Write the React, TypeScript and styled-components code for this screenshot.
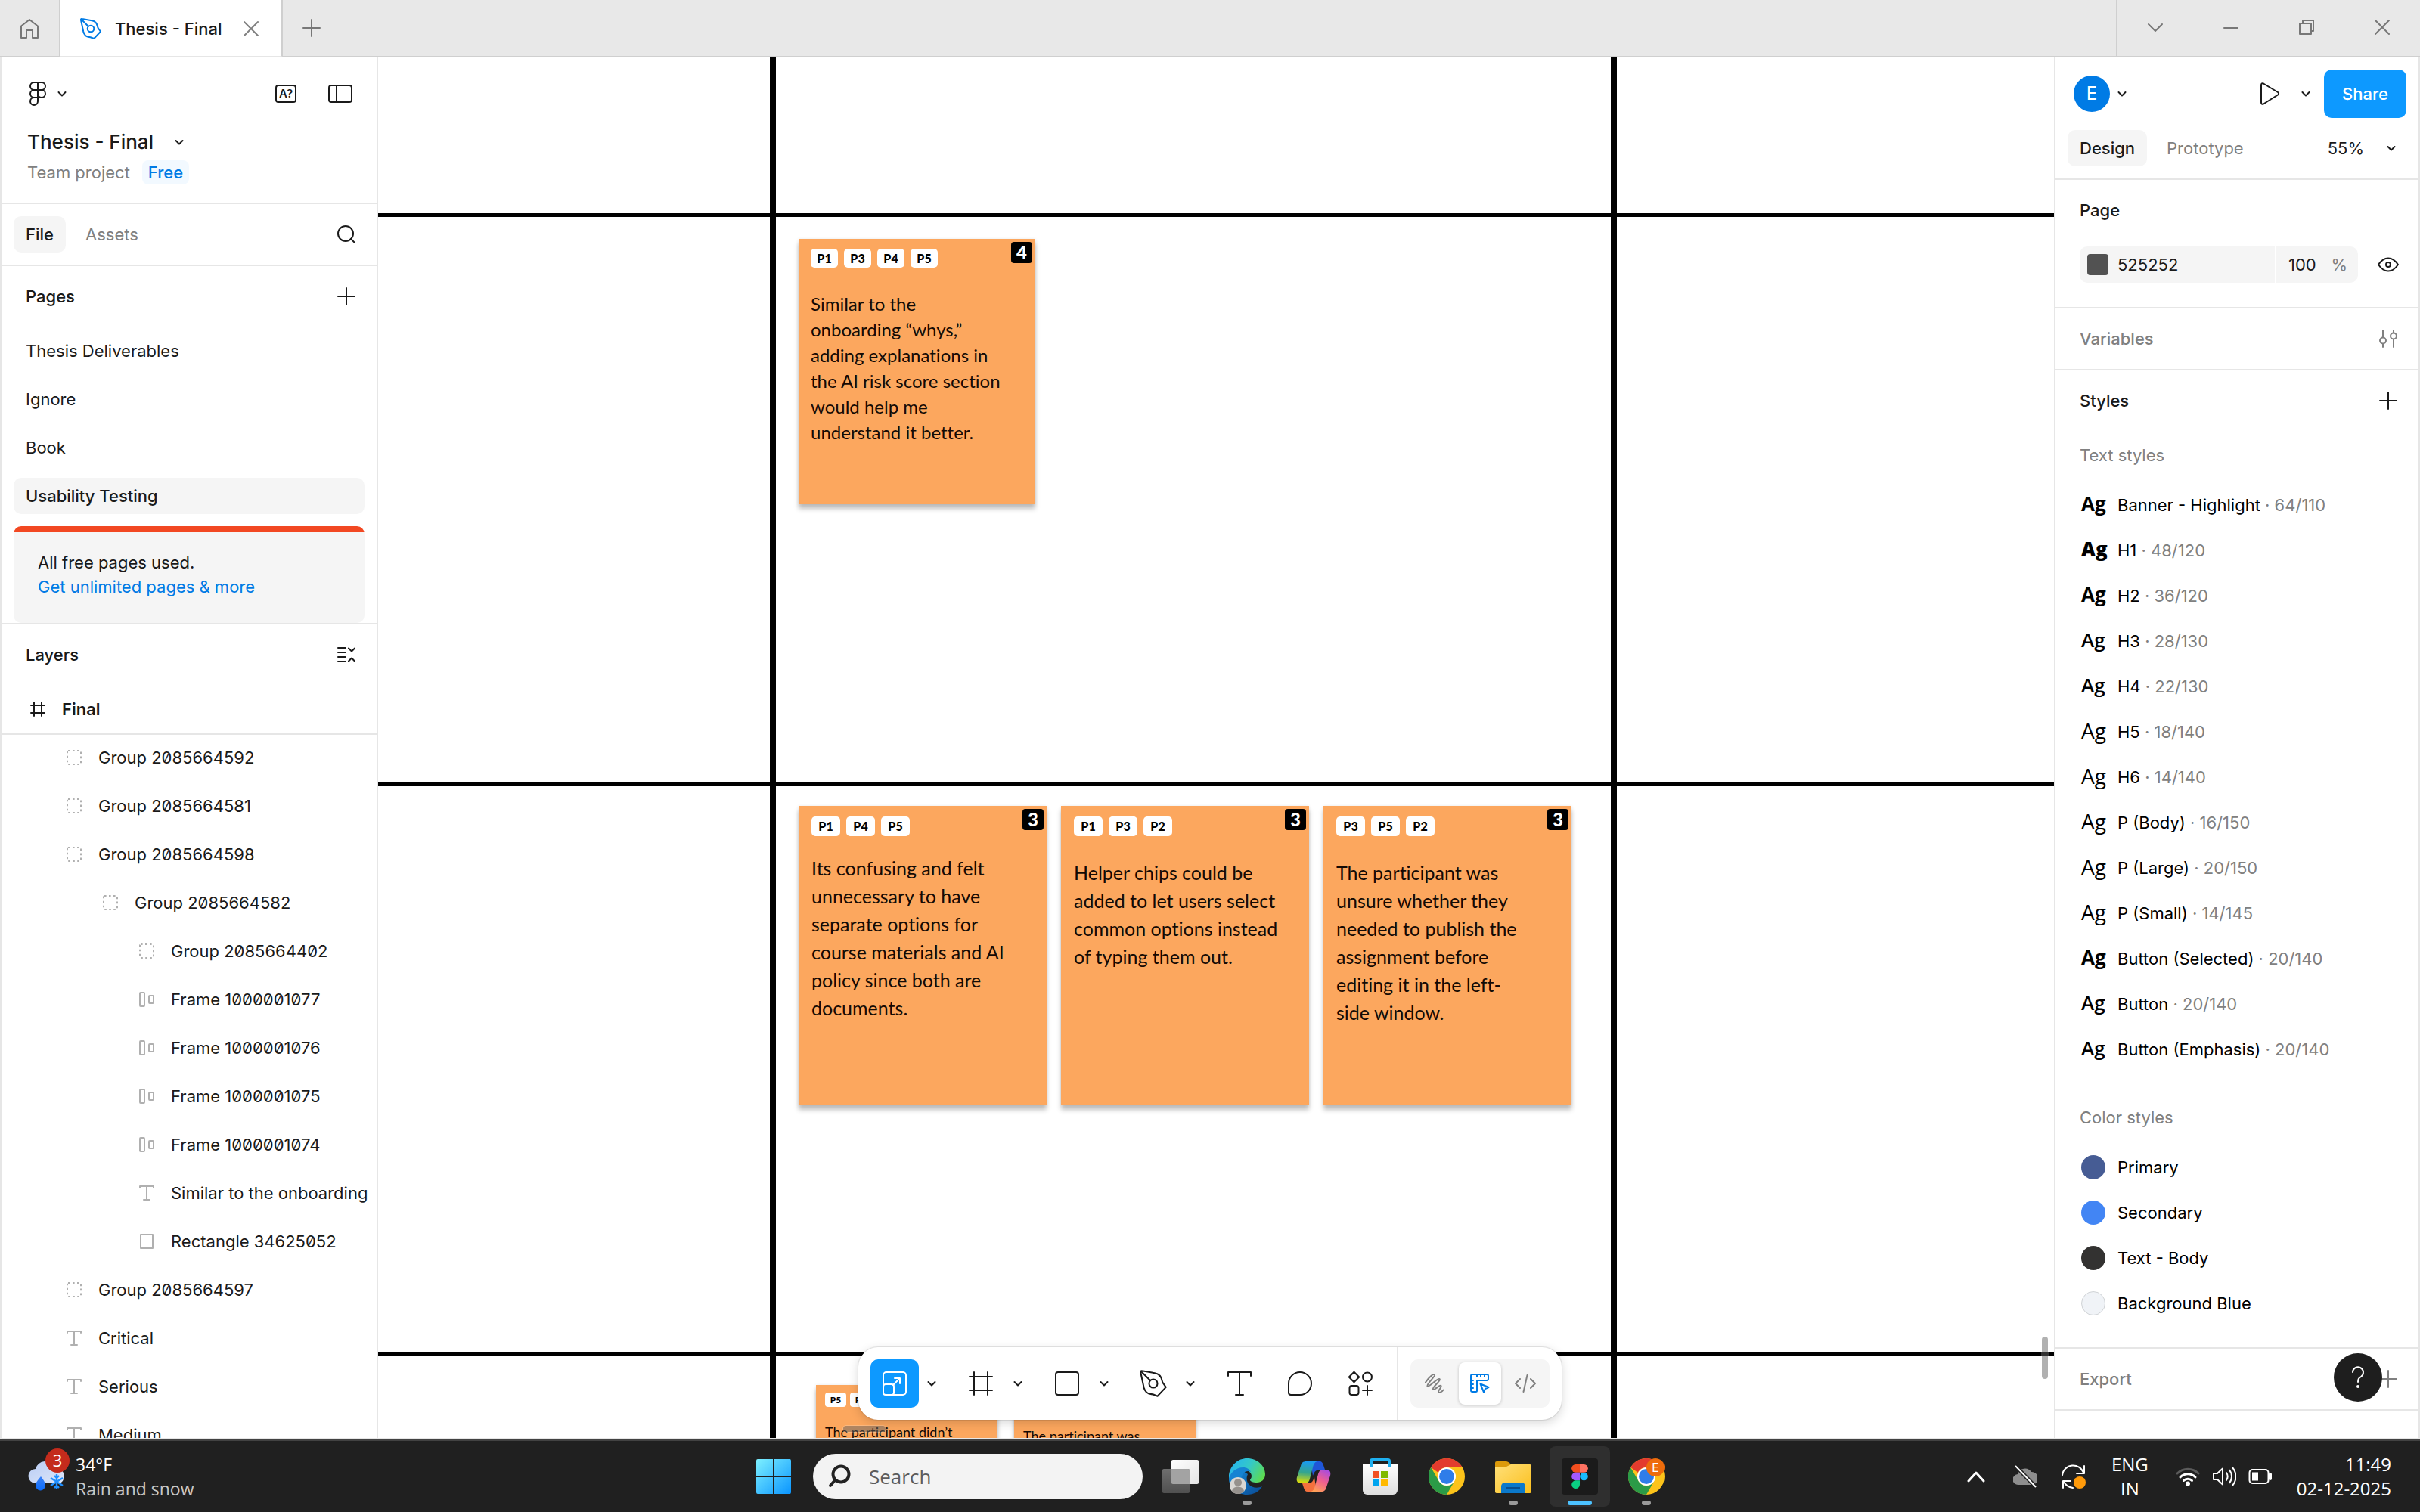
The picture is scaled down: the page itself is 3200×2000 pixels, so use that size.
import React from 'react';
import styled, { createGlobalStyle, css } from 'styled-components';

const c = {
  text: '#1a1a1a',
  muted: '#808080',
  line: '#e6e6e6',
  fill: '#f5f5f5',
  blue: '#0d99ff',
  link: '#007be5',
  note: '#fca75e',
  bar: '#202020',
};

const ui = "Inter, 'Liberation Sans', sans-serif";
const noteFont = "Lato, 'Liberation Sans', sans-serif";
const winFont = "'Open Sans', 'Noto Sans', sans-serif";

const GlobalStyle = createGlobalStyle`
  *, *::before, *::after { box-sizing: border-box; }
  html, body { margin: 0; padding: 0; }
  body { background: #fff; color: ${c.text}; font-family: ${ui}; font-size: 22px; line-height: 32px; overflow: hidden; }
  button, input { font: inherit; color: inherit; border: 0; background: none; padding: 0; margin: 0; }
  button { cursor: pointer; }
  ul { list-style: none; margin: 0; padding: 0; }
  h1, h2, h3, p { margin: 0; font: inherit; }
  svg { display: block; flex: none; }
`;

/* ---------- icons ---------- */

type IconProps = { w: number; h?: number; stroke?: string; sw?: number; children: React.ReactNode };
const Icon = ({ w, h = w, stroke = 'currentColor', sw = 2, children }: IconProps) => (
  <svg width={w} height={h} viewBox={`0 0 ${w} ${h}`} fill="none" stroke={stroke} strokeWidth={sw} strokeLinecap="round" strokeLinejoin="round" aria-hidden="true">
    {children}
  </svg>
);

const Chevron = () => <Icon w={24} sw={2}><path d="M7.500 10l4.500 4.500 4.500-4.500" /></Icon>;
const Plus = () => <Icon w={24}><path d="M12 1v22M1 12h22" /></Icon>;
const HomeIcon = () => <Icon w={28}><path d="M3 11.500L14 3l11 8.500V27h-7V17h-8v10H3z" /></Icon>;
const CloseIcon = () => <Icon w={24}><path d="M3 3l18 18M21 3L3 21" /></Icon>;
const PenIcon = ({ size = 32 }: { size?: number }) => (
  <svg width={size} height={size} viewBox="0 0 28 28" fill="none" stroke="currentColor" strokeWidth={size > 28 ? 1.6 : 2} strokeLinejoin="round" strokeLinecap="round" aria-hidden="true">
    <path d="M1 2.500C.8 1.500 1.500.8 2.500 1L15.500 3.300C19.500 4 22.300 7 23 11c.2 1.300.7 2.300 1.500 3.200l2.500 3.600-8.700 9.200-3.300-1.300c-1-.4-2-.6-3-.7-4-.4-6.700-3-7.700-7z" />
    <path d="M1.500 1.500l9.200 9.200" /><circle cx="14" cy="14" r="4.300" />
  </svg>
);
const FigmaOutline = () => (
  <Icon w={24} h={34}>
    <path d="M12 2H7a5 5 0 0 0 0 10h5zM12 2h5a5 5 0 0 1 0 10h-5zM12 12H7a5 5 0 0 0 0 10h5zM12 17a5 5 0 1 0 10 0 5 5 0 0 0-10 0zM7 22h5v5a5 5 0 1 1-5-5z" />
  </Icon>
);
const SidebarIcon = () => <Icon w={32} h={24}><rect x="1" y="1" width="30" height="22" rx="3" /><path d="M11 1v22" /></Icon>;
const SearchIcon = () => <Icon w={24}><circle cx="11" cy="11" r="10" /><path d="M18 18l5 5" /></Icon>;
const CollapseIcon = () => <Icon w={24} h={20}><path d="M1 1h10M1 7h10M1 13h10M1 19h10M15 1.500l4 4 4-4M15 18.500l4-4 4 4" /></Icon>;
const FrameIcon = ({ size = 20 }: { size?: number }) => (
  <Icon w={size}>
    {size === 20 ? <path d="M5 1v18M15 1v18M1 5h18M1 15h18" /> : <path d="M7 1v30M25 1v30M1 7h30M1 25h30" />}
  </Icon>
);

const layerIcons = {
  group: <Icon w={20} stroke="#b0b0b0"><rect x="1" y="1" width="18" height="18" rx="1" strokeDasharray="2.600 3.400" strokeLinecap="butt" /></Icon>,
  auto: <Icon w={20} stroke="#b0b0b0"><rect x="1" y="1" width="6" height="18" rx="1" /><rect x="13" y="5" width="6" height="10" rx="1" /></Icon>,
  text: <Icon w={20} stroke="#b0b0b0"><path d="M1 3V1h18v2M10 1v18M6 19h8" /></Icon>,
  rect: <Icon w={20} stroke="#b0b0b0"><rect x="2" y="1" width="16" height="18" /></Icon>,
};

/* ---------- shell ---------- */

const App_ = styled.div`
  display: grid;
  grid-template-rows: 76px minmax(0, 1fr) 96px;
  height: 100vh;
`;

const TitleBar = styled.header`
  display: flex;
  background: #e8e8e8;
  color: #777;
  border-bottom: 2px solid #cfcfcf;
`;
const HomeTab = styled.button`
  display: grid;
  place-items: center;
  width: 80px;
  border-right: 2px solid #cfcfcf;
`;
const FileTab = styled.div`
  display: flex;
  align-items: center;
  padding: 2px 28px 0 26px;
  margin-bottom: -2px;
  background: #fff;
  color: ${c.text};
  border-right: 2px solid #cfcfcf;
  border-bottom: 2px solid ${c.line};
`;
const TabIcon = styled.span`color: ${c.link};`;
const TabName = styled.span`
  padding: 0 27px 0 18px;
  font-weight: 500;
  font-size: 22px;
`;
const TabClose = styled.button`color: #808080;`;
const BarButton = styled.button`
  display: grid;
  place-items: center;
  width: 76px;
`;
const WindowButtons = styled.div`
  display: grid;
  grid-template-columns: repeat(4, 100px);
  margin-left: auto;
  padding-bottom: 2px;
  border-left: 2px solid #cfcfcf;
`;
const WindowButton = styled.button`
  display: grid;
  place-items: center;
`;

const Workspace = styled.div`
  position: relative;
  display: grid;
  grid-template-columns: 500px minmax(0, 1fr) 484px;
  min-height: 0;
  border-bottom: 2px solid ${c.line};
`;

const Panel = styled.aside`
  min-height: 0;
  overflow: hidden;
  background: #fff;
  border-left: 2px solid ${c.line};
  border-right: 2px solid ${c.line};
`;
const Section = styled.section<{ $pad?: string }>`
  padding: ${p => p.$pad ?? '0'};
  border-bottom: 2px solid ${c.line};
`;
const TopRow = styled.div<{ $pad: string }>`
  display: flex;
  align-items: center;
  height: 96px;
  padding: ${p => p.$pad};
`;
const Spacer = styled.span`flex: 1;`;
const IconButton = styled.button<{ $gap?: number; $mr?: number; $muted?: boolean }>`
  display: flex;
  align-items: center;
  gap: ${p => p.$gap ?? 0}px;
  margin-right: ${p => p.$mr ?? 0}px;
  color: ${p => (p.$muted ? c.muted : c.text)};
`;
const MissingFonts = styled.span`
  display: grid;
  place-items: center;
  width: 28px;
  height: 24px;
  border: 2px solid ${c.text};
  border-radius: 4px;
  font-size: 15px;
  line-height: 20px;
  font-weight: 600;
`;
const FileTitle = styled.button`
  display: flex;
  align-items: center;
  gap: 22px;
  height: 32px;
  padding-left: 34px;
  font-size: 26px;
  font-weight: 550;
`;
const FileMeta = styled.div`
  display: flex;
  align-items: center;
  gap: 16px;
  padding: 8px 0 24px 34px;
  color: ${c.muted};
`;
const PlanBadge = styled.span`
  padding: 0 8px;
  border-radius: 8px;
  background: #f2f9ff;
  color: ${c.link};
  font-weight: 500;
`;
const TabRow = styled.div<{ $pad: string }>`
  display: flex;
  align-items: center;
  gap: 10px;
  padding: ${p => p.$pad};
`;
const TabButton = styled.button<{ $active?: boolean }>`
  height: 48px;
  padding: 0 16px;
  border-radius: 10px;
  color: ${c.muted};
  ${p => p.$active && css`
    background: ${c.fill};
    color: ${c.text};
    font-weight: 550;
  `}
`;
const HeaderRow = styled.div<{ $muted?: boolean }>`
  display: flex;
  align-items: center;
  justify-content: space-between;
  height: 80px;
  padding: 0 28px 0 32px;
  font-weight: 550;
  color: ${p => (p.$muted ? c.muted : c.text)};
`;

/* ---------- left panel ---------- */

const PageList = styled.ul`padding: 0 16px;`;
const PageItem = styled.li`padding: 8px 0;`;
const PageButton = styled.button<{ $active?: boolean }>`
  display: block;
  width: 100%;
  height: 48px;
  padding: 0 16px;
  border-radius: 10px;
  text-align: left;
  ${p => p.$active && css`
    background: ${c.fill};
    font-weight: 550;
  `}
`;
const Upsell = styled.div`
  margin: 8px 16px 0;
  padding: 32px;
  border-radius: 10px;
  background: linear-gradient(#f24822 8px, ${c.fill} 8px);
`;
const UpsellLink = styled.a`
  color: ${c.link};
  text-decoration: none;
`;
const FrameRow = styled.div`
  display: flex;
  align-items: center;
  gap: 22px;
  height: 64px;
  padding-left: 38px;
  font-weight: 600;
  box-shadow: 0 2px 0 ${c.line};
`;
const LayerRow = styled.li<{ $depth: number }>`
  display: flex;
  align-items: center;
  gap: 22px;
  height: 64px;
  padding-left: ${p => 38 + p.$depth * 48}px;
  white-space: nowrap;
  font-variant-numeric: slashed-zero;
`;

type LayerKind = keyof typeof layerIcons;
const layers: [number, LayerKind, string][] = [
  [1, 'group', 'Group 2085664592'],
  [1, 'group', 'Group 2085664581'],
  [1, 'group', 'Group 2085664598'],
  [2, 'group', 'Group 2085664582'],
  [3, 'group', 'Group 2085664402'],
  [3, 'auto', 'Frame 1000001077'],
  [3, 'auto', 'Frame 1000001076'],
  [3, 'auto', 'Frame 1000001075'],
  [3, 'auto', 'Frame 1000001074'],
  [3, 'text', 'Similar to the onboarding'],
  [3, 'rect', 'Rectangle 34625052'],
  [1, 'group', 'Group 2085664597'],
  [1, 'text', 'Critical'],
  [1, 'text', 'Serious'],
  [1, 'text', 'Medium'],
];

const LeftPanel = () => (
  <Panel aria-label="Navigation">
    <Section>
      <TopRow $pad="0 32px 0 36px">
        <IconButton $gap={8} aria-label="Main menu"><FigmaOutline /><Chevron /></IconButton>
        <Spacer />
        <IconButton $mr={42} aria-label="Missing fonts"><MissingFonts>A?</MissingFonts></IconButton>
        <IconButton aria-label="Toggle sidebar"><SidebarIcon /></IconButton>
      </TopRow>
      <FileTitle>Thesis - Final<Chevron /></FileTitle>
      <FileMeta>Team project<PlanBadge>Free</PlanBadge></FileMeta>
    </Section>
    <Section>
      <TabRow $pad="16px 28px 16px 16px">
        <TabButton $active>File</TabButton>
        <TabButton>Assets</TabButton>
        <Spacer />
        <IconButton aria-label="Search"><SearchIcon /></IconButton>
      </TabRow>
    </Section>
    <Section>
      <HeaderRow><h2>Pages</h2><IconButton aria-label="Add page"><Plus /></IconButton></HeaderRow>
      <PageList>
        {['Thesis Deliverables', 'Ignore', 'Book', 'Usability Testing'].map(name => (
          <PageItem key={name}><PageButton $active={name === 'Usability Testing'}>{name}</PageButton></PageItem>
        ))}
      </PageList>
      <Upsell>
        <p>All free pages used.</p>
        <UpsellLink href="#upgrade">Get unlimited pages &amp; more</UpsellLink>
      </Upsell>
    </Section>
    <HeaderRow><h2>Layers</h2><IconButton aria-label="Collapse layers"><CollapseIcon /></IconButton></HeaderRow>
    <FrameRow><FrameIcon />Final</FrameRow>
    <ul>
      {layers.map(([depth, kind, name]) => (
        <LayerRow key={name} $depth={depth}>{layerIcons[kind]}{name}</LayerRow>
      ))}
    </ul>
  </Panel>
);

/* ---------- canvas ---------- */

const Canvas = styled.main`
  position: relative;
  overflow: hidden;
  background: #fff;
`;
const VLine = styled.div<{ $x: number }>`
  position: absolute;
  left: ${p => p.$x}px;
  top: 0;
  bottom: 0;
  width: 8px;
  background: #000;
`;
const HLine = styled.div<{ $y: number }>`
  position: absolute;
  top: ${p => p.$y}px;
  left: 0;
  right: 0;
  height: 5px;
  background: #000;
`;

type NoteSize = 'xs' | 's' | 'm';
const noteScale = {
  xs: { w: 240, h: 264, pad: 12, top: 10, chipW: 28, chipH: 19, gap: 5, chip: 12, font: 18, lh: 27, r: 4 },
  s: { w: 313, h: 351, pad: 16, top: 13, chipW: 36, chipH: 25, gap: 8, chip: 16, font: 24, lh: 34, r: 5 },
  m: { w: 328, h: 396, pad: 17, top: 14, chipW: 38, chipH: 26, gap: 8, chip: 16, font: 25, lh: 37, r: 5 },
};
const Note = styled.article<{ $size: NoteSize; $x: number; $y: number }>`
  position: absolute;
  left: ${p => p.$x}px;
  top: ${p => p.$y}px;
  width: ${p => noteScale[p.$size].w}px;
  height: ${p => noteScale[p.$size].h}px;
  padding: ${p => `${noteScale[p.$size].top}px ${noteScale[p.$size].pad}px`};
  background: ${c.note};
  box-shadow: 0 6px 6px rgba(0, 0, 0, 0.25), 0 0 4px rgba(0, 0, 0, 0.08);
  font-family: ${noteFont};
  font-variant-ligatures: none;
  color: #140a04;
`;
const Chips = styled.div<{ $size: NoteSize }>`
  display: flex;
  gap: ${p => noteScale[p.$size].gap}px;
`;
const Chip = styled.span<{ $size: NoteSize }>`
  width: ${p => noteScale[p.$size].chipW}px;
  height: ${p => noteScale[p.$size].chipH}px;
  border-radius: ${p => noteScale[p.$size].r}px;
  background: #fff;
  color: #000;
  font-size: ${p => noteScale[p.$size].chip}px;
  line-height: ${p => noteScale[p.$size].chipH}px;
  font-weight: 900;
  text-align: center;
`;
const Count = styled.span`
  position: absolute;
  top: 4px;
  right: 4px;
  width: 28px;
  height: 28px;
  border-radius: 4px;
  background: #000;
  color: #fff;
  font-size: 24px;
  line-height: 28px;
  font-weight: 900;
  text-align: center;
`;
const NoteText = styled.p<{ $size: NoteSize; $top: number }>`
  margin-top: ${p => p.$top}px;
  font-size: ${p => noteScale[p.$size].font}px;
  line-height: ${p => noteScale[p.$size].lh}px;
  white-space: pre;
`;

const notes: { size: NoteSize; x: number; y: number; chips: string[]; count?: number; top: number; text: string }[] = [
  { size: 's', x: 556, y: 240, chips: ['P1', 'P3', 'P4', 'P5'], count: 4, top: 31, text: 'Similar to the\nonboarding “whys,”\nadding explanations in\nthe AI risk score section\nwould help me\nunderstand it better.' },
  { size: 'm', x: 556, y: 990, chips: ['P1', 'P4', 'P5'], count: 3, top: 24, text: 'Its confusing and felt\nunnecessary to have\nseparate options for\ncourse materials and AI\npolicy since both are\ndocuments.' },
  { size: 'm', x: 903, y: 990, chips: ['P1', 'P3', 'P2'], count: 3, top: 30, text: 'Helper chips could be\nadded to let users select\ncommon options instead\nof typing them out.' },
  { size: 'm', x: 1250, y: 990, chips: ['P3', 'P5', 'P2'], count: 3, top: 30, text: 'The participant was\nunsure whether they\nneeded to publish the\nassignment before\nediting it in the left-\nside window.' },
  { size: 'xs', x: 579, y: 1756, chips: ['P5', 'P3'], top: 20, text: 'The participant didn’t' },
  { size: 'xs', x: 841, y: 1756, chips: ['P4'], top: 25, text: 'The participant was' },
];

const ScrollThumb = styled.div<{ $vertical?: boolean }>`
  position: absolute;
  border-radius: 5px;
  background: rgba(100, 100, 100, 0.5);
  box-shadow: 0 0 0 1px rgba(255, 255, 255, 0.2);
  ${p => (p.$vertical
    ? css`right: 8px; bottom: 78px; width: 8px; height: 56px;`
    : css`left: 615px; bottom: 8px; width: 56px; height: 8px;`)}
`;

const CanvasArea = () => (
  <Canvas>
    <HLine $y={206} /><HLine $y={959} /><HLine $y={1712} />
    <VLine $x={518} /><VLine $x={1630} />
    {notes.map((n, i) => (
      <Note key={i} $size={n.size} $x={n.x} $y={n.y}>
        <Chips $size={n.size}>{n.chips.map(t => <Chip key={t} $size={n.size}>{t}</Chip>)}</Chips>
        {n.count && <Count>{n.count}</Count>}
        <NoteText $size={n.size} $top={n.top}>{n.text}</NoteText>
      </Note>
    ))}
    <ScrollThumb $vertical />
    <ScrollThumb />
  </Canvas>
);

/* ---------- floating toolbar ---------- */

const ToolbarDock = styled.div`
  position: absolute;
  left: 0;
  right: 0;
  bottom: 24px;
  display: flex;
  justify-content: center;
  pointer-events: none;
`;
const Toolbar = styled.div`
  display: flex;
  align-items: center;
  gap: 16px;
  height: 96px;
  padding: 0 16px;
  border-radius: 26px;
  background: #fff;
  box-shadow: 0 0 1px 1px rgba(0, 0, 0, 0.1), 0 4px 14px rgba(0, 0, 0, 0.16);
  pointer-events: auto;
`;
const ToolGroup = styled.div`display: flex;`;
const Tool = styled.button<{ $active?: boolean }>`
  display: grid;
  place-items: center;
  width: 64px;
  height: 64px;
  border-radius: 10px;
  background: ${p => (p.$active ? c.blue : 'transparent')};
  color: ${p => (p.$active ? '#fff' : c.text)};
`;
const ToolMenu = styled.button`
  display: grid;
  place-items: center;
  width: 34px;
`;
const ToolDivider = styled.span`
  align-self: stretch;
  width: 2px;
  background: ${c.line};
`;
const Segment = styled.div`
  display: flex;
  align-items: center;
  gap: 4px;
  height: 64px;
  padding: 4px;
  border-radius: 10px;
  background: ${c.fill};
`;
const SegmentButton = styled.button<{ $active?: boolean }>`
  display: grid;
  place-items: center;
  width: 56px;
  height: 56px;
  border-radius: 8px;
  color: ${c.muted};
  ${p => p.$active && css`
    background: #fff;
    color: ${c.link};
    box-shadow: 0 1px 4px rgba(0, 0, 0, 0.2);
  `}
`;

const menuTools: [string, React.ReactNode][] = [
  ['Scale', <Icon w={32}><path d="M1 17V5a4 4 0 0 1 4-4h22a4 4 0 0 1 4 4v22a4 4 0 0 1-4 4H13" /><path d="M1 20a3 3 0 0 1 3-3h8a3 3 0 0 1 3 3v8a3 3 0 0 1-3 3H4a3 3 0 0 1-3-3z" /><path d="M14 18l9-9M16 9h7v7" /></Icon>],
  ['Frame', <FrameIcon size={32} />],
  ['Rectangle', <Icon w={32}><rect x="1" y="1" width="30" height="30" rx="3" /></Icon>],
  ['Pen', <PenIcon size={36} />],
];

const BottomToolbar = () => (
  <ToolbarDock>
    <Toolbar role="toolbar" aria-label="Tools">
      {menuTools.map(([name, icon]) => (
        <ToolGroup key={name}>
          <Tool $active={name === 'Scale'} aria-label={name}>{icon}</Tool>
          <ToolMenu aria-label={`${name} options`}><Chevron /></ToolMenu>
        </ToolGroup>
      ))}
      <Tool aria-label="Text"><Icon w={32}><path d="M1 6V1h30v5M16 1v30M11 31h10" /></Icon></Tool>
      <Tool aria-label="Comment"><Icon w={32}><path d="M16 1a15 15 0 0 1 0 30H4a3 3 0 0 1-3-3V16A15 15 0 0 1 16 1z" /></Icon></Tool>
      <Tool aria-label="Actions"><Icon w={32}><path d="M7.500.8l6.700 6.700-6.700 6.700L.8 7.500z" /><circle cx="25" cy="7.500" r="6" /><rect x="1.500" y="19" width="12" height="12" rx="3" /><path d="M25 19v12M19 25h12" /></Icon></Tool>
      <ToolDivider />
      <Segment>
        <SegmentButton aria-label="Draw"><Icon w={28}><path d="M2 12.500C7 5 12.500.5 14 2.500S3 14.500 4.500 17.500C7 19.500 18 6 20.500 8S10 19.500 12 21.500 21 15 22.500 17 17.500 23.500 19.500 25.500c1.500 1 4-.5 6-3" /></Icon></SegmentButton>
        <SegmentButton $active aria-label="Design"><Icon w={26}><path d="M7.500 24H3a2 2 0 0 1-2-2V3a2 2 0 0 1 2-2h19a2 2 0 0 1 2 2v4a2 2 0 0 1-2 2H9v13.500a1.500 1.500 0 0 1-1.500 1.500zM9 1v3M14 1v3M19 1v3M1 9h3M1 14h3M1 19h3" /><path d="M13.500 13.500l11 4.500-4.500 2-2 4.500z" /></Icon></SegmentButton>
        <SegmentButton aria-label="Dev mode"><Icon w={28} h={28}><path d="M7 8l-6 6 6 6M21 8l6 6-6 6M16.500 3l-5 22" /></Icon></SegmentButton>
      </Segment>
    </Toolbar>
  </ToolbarDock>
);

/* ---------- right panel ---------- */

const Avatar = styled.span`
  width: 48px;
  height: 48px;
  border-radius: 50%;
  background: ${c.link};
  color: #fff;
  font-size: 24px;
  line-height: 48px;
  text-align: center;
`;
const ShareButton = styled.button`
  height: 64px;
  padding: 0 24px;
  border-radius: 10px;
  background: ${c.blue};
  color: #fff;
  font-weight: 500;
`;
const ColorRow = styled.div`
  display: flex;
  align-items: center;
  padding: 8px 26px 32px 32px;
`;
const HexField = styled.label`
  display: flex;
  align-items: center;
  flex: 1;
  min-width: 0;
  gap: 12px;
  height: 48px;
  margin-right: 2px;
  padding-left: 10px;
  border-radius: 10px 0 0 10px;
  background: ${c.fill};
`;
const PageSwatch = styled.span`
  width: 28px;
  height: 28px;
  border-radius: 4px;
  background: #525252;
`;
const HexInput = styled.input`
  flex: 1;
  width: 0;
  min-width: 0;
`;
const OpacityField = styled.label`
  display: flex;
  align-items: center;
  flex: none;
  width: 108px;
  height: 48px;
  margin-right: 26px;
  padding: 0 14px 0 16px;
  border-radius: 0 10px 10px 0;
  background: ${c.fill};
  color: ${c.muted};
`;
const OpacityInput = styled.input`
  flex: 1;
  width: 0;
  min-width: 0;
  color: ${c.text};
`;
const ListLabel = styled.h3`
  height: 64px;
  padding-left: 32px;
  line-height: 64px;
  color: ${c.muted};
`;
const StyleList = styled.ul`padding: 4px 0 28px;`;
const StyleItem = styled.li`
  display: flex;
  align-items: center;
  height: 60px;
  padding-left: 34px;
  color: #000;
  white-space: pre;
`;
const Sample = styled.span<{ $weight: number }>`
  width: 48px;
  padding-bottom: 4px;
  font-family: ${winFont};
  font-size: ${p => (p.$weight > 400 ? 26 : 28)}px;
  font-weight: ${p => p.$weight};
`;
const Spec = styled.span`color: ${c.muted};`;
const Swatch = styled.span<{ $color: string; $outlined?: boolean }>`
  width: 32px;
  height: 32px;
  margin-right: 16px;
  border-radius: 50%;
  background: ${p => p.$color};
  border: ${p => (p.$outlined ? '1px solid #d0d3d6' : '0')};
`;
const HelpButton = styled.button`
  position: absolute;
  right: 50px;
  bottom: 48px;
  display: grid;
  place-items: center;
  width: 64px;
  height: 64px;
  border-radius: 50%;
  background: #1e1e1e;
  color: #fff;
`;

const textStyles: [number, string, string][] = [
  [700, 'Banner - Highlight', '64/110'],
  [800, 'H1', '48/120'],
  [700, 'H2', '36/120'],
  [600, 'H3', '28/130'],
  [600, 'H4', '22/130'],
  [400, 'H5', '18/140'],
  [400, 'H6', '14/140'],
  [400, 'P (Body)', '16/150'],
  [400, 'P (Large)', '20/150'],
  [400, 'P (Small)', '14/145'],
  [700, 'Button (Selected)', '20/140'],
  [600, 'Button', '20/140'],
  [600, 'Button (Emphasis)', '20/140'],
];
const colorStyles: [string, string][] = [
  ['#465c94', 'Primary'],
  ['#4285f4', 'Secondary'],
  ['#333231', 'Text - Body'],
  ['#f0f3f7', 'Background Blue'],
];

const RightPanel = () => (
  <Panel aria-label="Properties">
    <Section $pad="0 0 16px">
      <TopRow $pad="0 16px 0 24px">
        <IconButton $gap={4} aria-label="Account"><Avatar>E</Avatar><Chevron /></IconButton>
        <Spacer />
        <IconButton $mr={20} aria-label="Present"><Icon w={32}><path d="M5 4.500c0-2 1.500-2.800 3-2l19 11.500c1.500 1 1.500 2.500 0 3.500L8 29.500c-1.500.8-3 0-3-2z" /></Icon></IconButton>
        <IconButton $mr={12} aria-label="Present options"><Chevron /></IconButton>
        <ShareButton>Share</ShareButton>
      </TopRow>
      <TabRow $pad="0 24px 0 16px">
        <TabButton $active>Design</TabButton>
        <TabButton>Prototype</TabButton>
        <Spacer />
        <IconButton $gap={24}>55%<Chevron /></IconButton>
      </TabRow>
    </Section>
    <Section>
      <HeaderRow><h2>Page</h2></HeaderRow>
      <ColorRow>
        <HexField><PageSwatch /><HexInput aria-label="Page color" defaultValue="525252" /></HexField>
        <OpacityField><OpacityInput aria-label="Opacity" defaultValue="100" />%</OpacityField>
        <IconButton aria-label="Toggle visibility"><Icon w={28} h={20}><path d="M1 10c4-6 8-8.500 13-8.500S23 4 27 10c-4 6-8 8.500-13 8.500S5 16 1 10z" /><circle cx="14" cy="10" r="3" /></Icon></IconButton>
      </ColorRow>
    </Section>
    <Section>
      <HeaderRow $muted><h2>Variables</h2><IconButton $muted aria-label="Open variables"><Icon w={24}><path d="M5 1v9M5 19v4M19 1v3M19 13v10" /><circle cx="5" cy="14.500" r="4" /><circle cx="19" cy="8.500" r="4" /></Icon></IconButton></HeaderRow>
    </Section>
    <Section>
      <HeaderRow><h2>Styles</h2><IconButton aria-label="Add style"><Plus /></IconButton></HeaderRow>
      <ListLabel>Text styles</ListLabel>
      <StyleList>
        {textStyles.map(([weight, name, spec]) => (
          <StyleItem key={name}><Sample $weight={weight}>Ag</Sample>{name}<Spec> · {spec}</Spec></StyleItem>
        ))}
      </StyleList>
      <ListLabel>Color styles</ListLabel>
      <StyleList>
        {colorStyles.map(([color, name]) => (
          <StyleItem key={name}><Swatch $color={color} $outlined={name === 'Background Blue'} />{name}</StyleItem>
        ))}
      </StyleList>
    </Section>
    <Section>
      <HeaderRow $muted><h2>Export</h2><IconButton $muted aria-label="Add export"><Plus /></IconButton></HeaderRow>
    </Section>
  </Panel>
);

/* ---------- taskbar ---------- */

const Taskbar = styled.footer`
  display: grid;
  grid-template-columns: 1fr auto 1fr;
  align-items: center;
  background: ${c.bar};
  border-top: 2px solid #424242;
  color: #fff;
  font-family: ${winFont};
  font-size: 24px;
`;
const Weather = styled.button`
  display: flex;
  align-items: center;
  gap: 6px;
  padding-left: 36px;
  font-size: 23px;
  text-align: left;
`;
const WeatherPlace = styled.span`
  display: block;
  color: #c8c8c8;
`;
const TaskGroup = styled.div`
  display: flex;
  align-items: center;
  gap: 8px;
`;
const TaskButton = styled.button<{ $active?: boolean }>`
  position: relative;
  display: grid;
  place-items: center;
  width: 80px;
  height: 80px;
  border-radius: 8px;
  background: ${p => (p.$active ? '#2f2f2f' : 'transparent')};
`;
const RunMark = styled.span<{ $active?: boolean }>`
  position: absolute;
  left: 0;
  right: 0;
  bottom: 2px;
  width: ${p => (p.$active ? 32 : 12)}px;
  height: 6px;
  margin: 0 auto;
  border-radius: 3px;
  background: ${p => (p.$active ? '#4cc2ff' : '#9a9a9a')};
`;
const SearchBox = styled.label`
  display: flex;
  align-items: center;
  gap: 22px;
  width: 436px;
  height: 60px;
  margin: 0 2px 0 4px;
  padding: 0 20px;
  border-radius: 30px;
  background: #f3f3f3;
  color: #222;
  font-size: 26px;
`;
const SearchInput = styled.input`
  flex: 1;
  min-width: 0;
  &::placeholder { color: #5c5c5c; opacity: 1; }
`;
const Tray = styled.div`
  display: flex;
  align-items: center;
  justify-content: flex-end;
  padding-right: 38px;
`;
const TrayButton = styled.button<{ $mr: number }>`
  margin-right: ${p => p.$mr}px;
  line-height: 32px;
  color: #fff;
`;
const TrayStatus = styled.button`
  display: flex;
  gap: 16px;
  margin-right: 32px;
  color: #fff;
`;
const Clock = styled.button`
  line-height: 32px;
  text-align: right;
  color: #fff;
`;
const Line = styled.span`display: block;`;

const Raw = ({ w = 48, h = w, children }: { w?: number; h?: number; children: React.ReactNode }) => (
  <svg width={w} height={h} viewBox={`0 0 ${w} ${h}`} aria-hidden="true">{children}</svg>
);

const WeatherIcon = () => (
  <Raw w={58} h={76}>
    <defs>
      <linearGradient id="cloud" x1="0" y1="0" x2="1" y2="1"><stop offset="0" stopColor="#b9cdf5" /><stop offset="1" stopColor="#dde6f8" /></linearGradient>
      <linearGradient id="drop" x1="0" y1="0" x2="0" y2="1"><stop offset="0" stopColor="#3b82f6" /><stop offset="1" stopColor="#0a6cff" /></linearGradient>
    </defs>
    <path d="M11 47a9.500 9.500 0 0 1 0-19 13 13 0 0 1 25-1 11 11 0 0 1 8 20z" fill="url(#cloud)" />
    <path d="M18 38c4 5 6 8 6 12a6.500 6.500 0 0 1-13 0c0-4 3-7 7-12z" fill="url(#drop)" />
    <path d="M39 35v20M31 40l16 10M47 40l-16 10M36 37l3 3 3-3M36 53l3-3 3 3" stroke="#1f8fff" strokeWidth="2.400" fill="none" />
    <circle cx="40" cy="17" r="16" fill="#c42b1c" />
    <text x="40" y="25" textAnchor="middle" fill="#fff" fontSize="22" fontFamily={winFont}>3</text>
  </Raw>
);
const StartIcon = () => (
  <Raw w={46}>
    <defs><linearGradient id="win" x1="0" y1="0" x2="1" y2="1"><stop offset="0" stopColor="#7df0ff" /><stop offset="1" stopColor="#0a95ff" /></linearGradient></defs>
    <path fill="url(#win)" d="M2 0h20v22H0V2a2 2 0 0 1 2-2zM24 0h20a2 2 0 0 1 2 2v20H24zM0 24h22v22H2a2 2 0 0 1-2-2zM24 24h22v20a2 2 0 0 1-2 2H24z" />
  </Raw>
);
const TaskViewIcon = () => (
  <Raw>
    <defs>
      <linearGradient id="tv" x1="0" y1="0" x2="1" y2="1"><stop offset="0" stopColor="#fff" /><stop offset="1" stopColor="#e4e4e4" /></linearGradient>
      <linearGradient id="tg" x1="0" y1="0" x2="0" y2="1"><stop offset="0" stopColor="#6e6e6e" /><stop offset="1" stopColor="#505050" /></linearGradient>
    </defs>
    <rect x="12" y="2" width="36" height="32" rx="2" fill="url(#tv)" />
    <rect y="14" width="36" height="32" rx="2" fill="url(#tg)" />
    <path d="M12 14h22a2 2 0 0 1 2 2v18H14a2 2 0 0 1-2-2z" fill="#a3a3a3" />
  </Raw>
);
const EdgeIcon = () => (
  <Raw>
    <defs>
      <linearGradient id="e1" x1="0" y1=".3" x2="1" y2=".7"><stop offset="0" stopColor="#25b4f0" /><stop offset=".5" stopColor="#35c9c6" /><stop offset="1" stopColor="#5fdc4b" /></linearGradient>
      <linearGradient id="e2" x1="0" y1="0" x2="1" y2="1"><stop offset="0" stopColor="#1490df" /><stop offset="1" stopColor="#0b4a94" /></linearGradient>
    </defs>
    <path d="M0 25c1 13 11 23 24 23 9 0 16-4 20-11-6 3-14 2-18-3-3-4-3-9-1-13L10 11z" fill="url(#e2)" />
    <path d="M0 22C2 9 12 0 24 0c14 0 24 10 24 21 0 7-5 11-11 11-5 0-9-1.500-9-3.500 0-1 2-2 2-5 0-5-5-8-10-8C10 15.500 3 20 0 27z" fill="url(#e1)" />
    <path d="M0 27c2-8 9-15 19-15 4 0 8 2 10 6-3-2-8-1-10 2-4 5-4 14 2 24C9 45 0 38 0 27z" fill="#1583d3" />
    <circle cx="12" cy="36" r="11" fill="#d9d6d3" />
    <circle cx="12" cy="32" r="5" fill="#96918d" />
    <path d="M4 43.500c1-8 15-8 16 0-4 4.500-12 4.500-16 0z" fill="#96918d" />
  </Raw>
);
const CopilotIcon = () => (
  <Raw>
    <defs>
      <linearGradient id="c1" x1=".3" y1="0" x2="0.200" y2="1"><stop offset="0" stopColor="#1a9bf0" /><stop offset=".5" stopColor="#35a58c" /><stop offset="1" stopColor="#e8e000" /></linearGradient>
      <linearGradient id="c2" x1=".8" y1="0" x2=".3" y2="1"><stop offset="0" stopColor="#a64be0" /><stop offset=".5" stopColor="#f05f90" /><stop offset="1" stopColor="#ffa057" /></linearGradient>
    </defs>
    <path d="M20 4h12c3 0 4 2 5 5l2 6h-7c-4 0-7 2-9 8z" fill="#1f56d8" />
    <path d="M28 44H16c-3 0-4-2-5-5l-2-6h8c4 0 6-2 8-8z" fill="#f4713d" />
    <path d="M14 4h15c-4 1-5 4-6 8l-4 15c-1 4-3 6-7 6H7c-5 0-6-4-5-8l5-15c1-4 3-6 7-6z" fill="url(#c1)" />
    <path d="M34 44H20c4-1 5-4 6-8l4-15c1-4 3-6 7-6h4c5 0 6 4 5 8l-5 15c-1 4-3 6-7 6z" fill="url(#c2)" />
  </Raw>
);
const StoreIcon = () => (
  <Raw>
    <defs><linearGradient id="st" x1="0" y1="0" x2="0" y2="1"><stop offset="0" stopColor="#fff" /><stop offset="1" stopColor="#dedede" /></linearGradient></defs>
    <path d="M1 7h46v35a6 6 0 0 1-6 6H7a6 6 0 0 1-6-6z" fill="url(#st)" />
    <path d="M12 11V3.500A1.500 1.500 0 0 1 13.500 2h21A1.500 1.500 0 0 1 36 3.500V11" fill="none" stroke="#1eb0f0" strokeWidth="4" />
    <path d="M14 17h9v9h-9z" fill="#f25022" /><path d="M25 17h9v9h-9z" fill="#7fba00" />
    <path d="M14 28h9v9h-9z" fill="#00a4ef" /><path d="M25 28h9v9h-9z" fill="#ffb900" />
  </Raw>
);
const ChromeIcon = ({ badge }: { badge?: string }) => (
  <Raw>
    <circle cx="24" cy="24" r="24" fill="#fcc31a" />
    <path d="M3.200 12a24 24 0 0 1 41.600 0H24a12 12 0 0 0-11 7z" fill="#e33b2e" />
    <path d="M3.200 12A24 24 0 0 0 24 48l10.400-18a12 12 0 0 1-20.800 0z" fill="#2b9b47" />
    <circle cx="24" cy="24" r="12" fill="#fff" /><circle cx="24" cy="24" r="10" fill="#2f7de9" />
    {badge && <><circle cx="36" cy="12" r="12" fill="#ee6c0b" /><text x="36" y="18" textAnchor="middle" fill="#fff" fontSize="16" fontFamily={ui}>{badge}</text></>}
  </Raw>
);
const FolderIcon = () => (
  <Raw>
    <defs><linearGradient id="fo" x1="0" y1="0" x2="1" y2="1"><stop offset="0" stopColor="#ffe07a" /><stop offset="1" stopColor="#fbbf1c" /></linearGradient></defs>
    <path d="M0 6a2 2 0 0 1 2-2h12c3 0 4 1 7 4v6H0z" fill="#dc9a0a" />
    <path d="M0 11h15l6-3h25a2 2 0 0 1 2 2v34a2 2 0 0 1-2 2H2a2 2 0 0 1-2-2z" fill="url(#fo)" />
    <path d="M8 46V37a5 5 0 0 1 5-5h22a5 5 0 0 1 5 5v9z" fill="#0b79cb" />
    <path d="M15 39h18" stroke="#0a4f8f" strokeWidth="2" />
  </Raw>
);
const FigmaIcon = () => (
  <Raw>
    <rect width="48" height="48" rx="4" fill="#1b1b1b" />
    <path d="M24 8h-5.500a5.300 5.300 0 0 0 0 10.700H24z" fill="#f24e1e" /><path d="M24 8h5.500a5.300 5.300 0 0 1 0 10.700H24z" fill="#ff7262" />
    <path d="M24 18.700h-5.500a5.300 5.300 0 0 0 0 10.600H24z" fill="#a259ff" /><circle cx="29.500" cy="24" r="5.300" fill="#1abcfe" />
    <path d="M18.500 29.300H24v5.400a5.400 5.400 0 1 1-5.500-5.400z" fill="#0acf83" />
  </Raw>
);

const TaskbarView = () => (
  <Taskbar>
    <Weather>
      <WeatherIcon />
      <span>34°F<WeatherPlace>Rain and snow</WeatherPlace></span>
    </Weather>
    <TaskGroup>
      <TaskButton aria-label="Start"><StartIcon /></TaskButton>
      <SearchBox>
        <Icon w={32} sw={4}><circle cx="17" cy="13" r="10.500" /><path d="M9.500 20.500L3 28" /></Icon>
        <SearchInput placeholder="Search" aria-label="Search" />
      </SearchBox>
      <TaskButton aria-label="Task view"><TaskViewIcon /></TaskButton>
      <TaskButton aria-label="Edge"><EdgeIcon /><RunMark /></TaskButton>
      <TaskButton aria-label="Copilot"><CopilotIcon /></TaskButton>
      <TaskButton aria-label="Store"><StoreIcon /></TaskButton>
      <TaskButton aria-label="Chrome"><ChromeIcon /></TaskButton>
      <TaskButton aria-label="Explorer"><FolderIcon /><RunMark /></TaskButton>
      <TaskButton $active aria-label="Figma"><FigmaIcon /><RunMark $active /></TaskButton>
      <TaskButton aria-label="Chrome profile"><ChromeIcon badge="E" /><RunMark /></TaskButton>
    </TaskGroup>
    <Tray>
      <TrayButton $mr={37} aria-label="Hidden icons"><Icon w={24} sw={3}><path d="M2 18L12 7l10 11" /></Icon></TrayButton>
      <TrayButton $mr={32} aria-label="OneDrive">
        <Raw w={32}>
          <path d="M7 27a7 7 0 0 1-1-14 10 10 0 0 1 18-3 8.500 8.500 0 0 1 1 17z" fill="#8e8e8e" />
          <path d="M3 2l27 28" stroke="#202020" strokeWidth="5" /><path d="M3 2l27 28" stroke="#fff" strokeWidth="2" />
        </Raw>
      </TrayButton>
      <TrayButton $mr={34} aria-label="Updates">
        <Icon w={32}><path d="M1 14A14.500 14.500 0 0 1 29 11M30 2v10H20M2 31V22h10M3 23c2 4 6 7 12 8" /><circle cx="24" cy="24" r="8" fill="#ff9a0a" stroke="none" /></Icon>
      </TrayButton>
      <TrayButton $mr={36}><Line>ENG</Line><Line>IN</Line></TrayButton>
      <TrayStatus aria-label="Network, volume, battery">
        <Icon w={32} sw={3}><path d="M2 12a20 20 0 0 1 28 0" stroke="#5a5a5a" /><path d="M6 17a14 14 0 0 1 20 0M10.500 21.500a8 8 0 0 1 11 0" /><circle cx="16" cy="25.500" r="3" fill="#fff" stroke="none" /></Icon>
        <Icon w={32}><path d="M2 12v8h5l7 6.500v-21L7 12zM19 11c2 3 2 7 0 10M23 7.500c4 5 4 12 0 17M27 4c6 7 6 17 0 24" /></Icon>
        <Icon w={32}><rect x="1.500" y="7" width="25" height="18" rx="4" /><path d="M29 13v6" strokeWidth="4" /><path d="M5 10.500h8v11H5z" fill="#fff" stroke="none" /></Icon>
      </TrayStatus>
      <Clock><Line>11:49</Line><Line>02-12-2025</Line></Clock>
    </Tray>
  </Taskbar>
);

export default function App() {
  return (
    <App_>
      <GlobalStyle />
      <TitleBar>
        <HomeTab aria-label="Home"><HomeIcon /></HomeTab>
        <FileTab>
          <TabIcon><PenIcon size={28} /></TabIcon>
          <TabName>Thesis - Final</TabName>
          <TabClose aria-label="Close tab"><CloseIcon /></TabClose>
        </FileTab>
        <BarButton aria-label="New tab"><Plus /></BarButton>
        <WindowButtons>
          <WindowButton aria-label="Tabs menu"><Icon w={24}><path d="M3 8l9 9 9-9" /></Icon></WindowButton>
          <WindowButton aria-label="Minimize"><Icon w={24}><path d="M3 13h18" /></Icon></WindowButton>
          <WindowButton aria-label="Restore"><Icon w={24}><path d="M3 7h15v14H3zM7 7V3h14v14h-3" /></Icon></WindowButton>
          <WindowButton aria-label="Close"><CloseIcon /></WindowButton>
        </WindowButtons>
      </TitleBar>
      <Workspace>
        <LeftPanel />
        <CanvasArea />
        <RightPanel />
        <BottomToolbar />
        <HelpButton aria-label="Help">
          <Icon w={24} h={32}><path d="M5 9a7 7 0 1 1 11 6c-3 2-4 3-4 7" /><circle cx="12" cy="28" r="1" fill="#fff" /></Icon>
        </HelpButton>
      </Workspace>
      <TaskbarView />
    </App_>
  );
}
